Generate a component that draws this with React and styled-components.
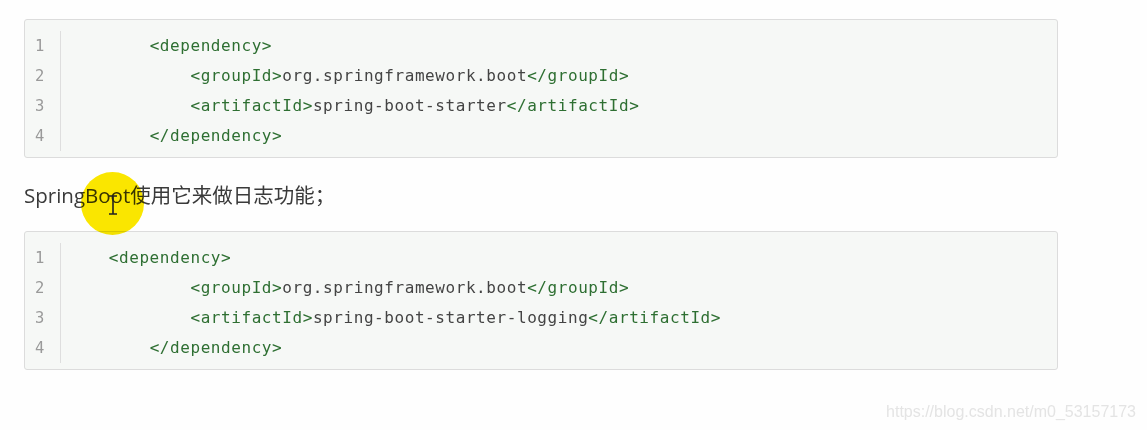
import styled, { createGlobalStyle } from 'styled-components'

const GlobalStyle = createGlobalStyle`
  html, body {
    margin: 0;
    padding: 0;
    background-color: #fefefe;
  }
`

const Page = styled.main`
  position: relative;
  height: 430px;
  box-sizing: border-box;
  padding: 19px 0 0 24px;
  overflow: hidden;
`

const CodeBox = styled.div`
  width: 1034px;
  box-sizing: border-box;
  display: flex;
  background-color: #f6f8f6;
  border: 1px solid #dcdcdc;
  border-radius: 3px;
  padding: 11px 0 6px;
`

const Gutter = styled.ol`
  list-style: none;
  margin: 0;
  padding: 0 0 0 10px;
  width: 25px;
  border-right: 1px solid #dedede;
  font-family: 'DejaVu Sans Mono', monospace;
  font-size: 15.5px;
  color: #9a9a9a;

  li {
    height: 30px;
    line-height: 30px;
  }
`

const Code = styled.pre`
  margin: 0;
  padding-left: 7px;
  font-family: 'DejaVu Sans Mono', monospace;
  font-size: 16px;
  letter-spacing: 0.57px;
  line-height: 30px;
  color: #444;
`

const Tag = styled.span`
  color: #2e6f32;
`

const Paragraph = styled.p`
  margin: 22px 0 21px;
  height: 30px;
  line-height: 30px;
  font-family: 'Open Sans', 'Noto Sans CJK SC', sans-serif;
  font-size: 20.5px;
  color: #3a3a3a;
  position: relative;
`

const Highlight = styled.span`
  position: absolute;
  left: 57px;
  top: -8px;
  width: 63px;
  height: 63px;
  border-radius: 50%;
  background-color: #fbe700;
  mix-blend-mode: multiply;
  pointer-events: none;
`

const Caret = styled.svg`
  position: absolute;
  left: 84px;
  top: 15px;
`

const Watermark = styled.span`
  position: absolute;
  right: 11px;
  bottom: 9px;
  font-family: 'Liberation Sans', Arial, sans-serif;
  font-size: 16px;
  color: #e4e4e4;
`

function Line({ indent, open, text, close }) {
  return (
    <div>
      {' '.repeat(indent)}
      <Tag>{open}</Tag>
      {text}
      {close && <Tag>{close}</Tag>}
    </div>
  )
}

function Block({ lines }) {
  return (
    <CodeBox>
      <Gutter>
        {lines.map((_, i) => (
          <li key={i}>{i + 1}</li>
        ))}
      </Gutter>
      <Code>
        {lines.map((l, i) => (
          <Line key={i} {...l} />
        ))}
      </Code>
    </CodeBox>
  )
}

const first = [
  { indent: 8, open: '<dependency>' },
  { indent: 12, open: '<groupId>', text: 'org.springframework.boot', close: '</groupId>' },
  { indent: 12, open: '<artifactId>', text: 'spring-boot-starter', close: '</artifactId>' },
  { indent: 8, open: '</dependency>' },
]

const second = [
  { indent: 4, open: '<dependency>' },
  { indent: 12, open: '<groupId>', text: 'org.springframework.boot', close: '</groupId>' },
  { indent: 12, open: '<artifactId>', text: 'spring-boot-starter-logging', close: '</artifactId>' },
  { indent: 8, open: '</dependency>' },
]

export default function App() {
  return (
    <>
      <GlobalStyle />
      <Page>
        <Block lines={first} />
        <Paragraph>
          SpringBoot使用它来做日志功能；
          <Highlight />
          <Caret width="10" height="20" viewBox="0 0 10 20">
            <path d="M1 1h8M5 1v18M1 19h8" stroke="#222" strokeWidth="1.6" fill="none" />
          </Caret>
        </Paragraph>
        <Block lines={second} />
        <Watermark>https://blog.csdn.net/m0_53157173</Watermark>
      </Page>
    </>
  )
}
